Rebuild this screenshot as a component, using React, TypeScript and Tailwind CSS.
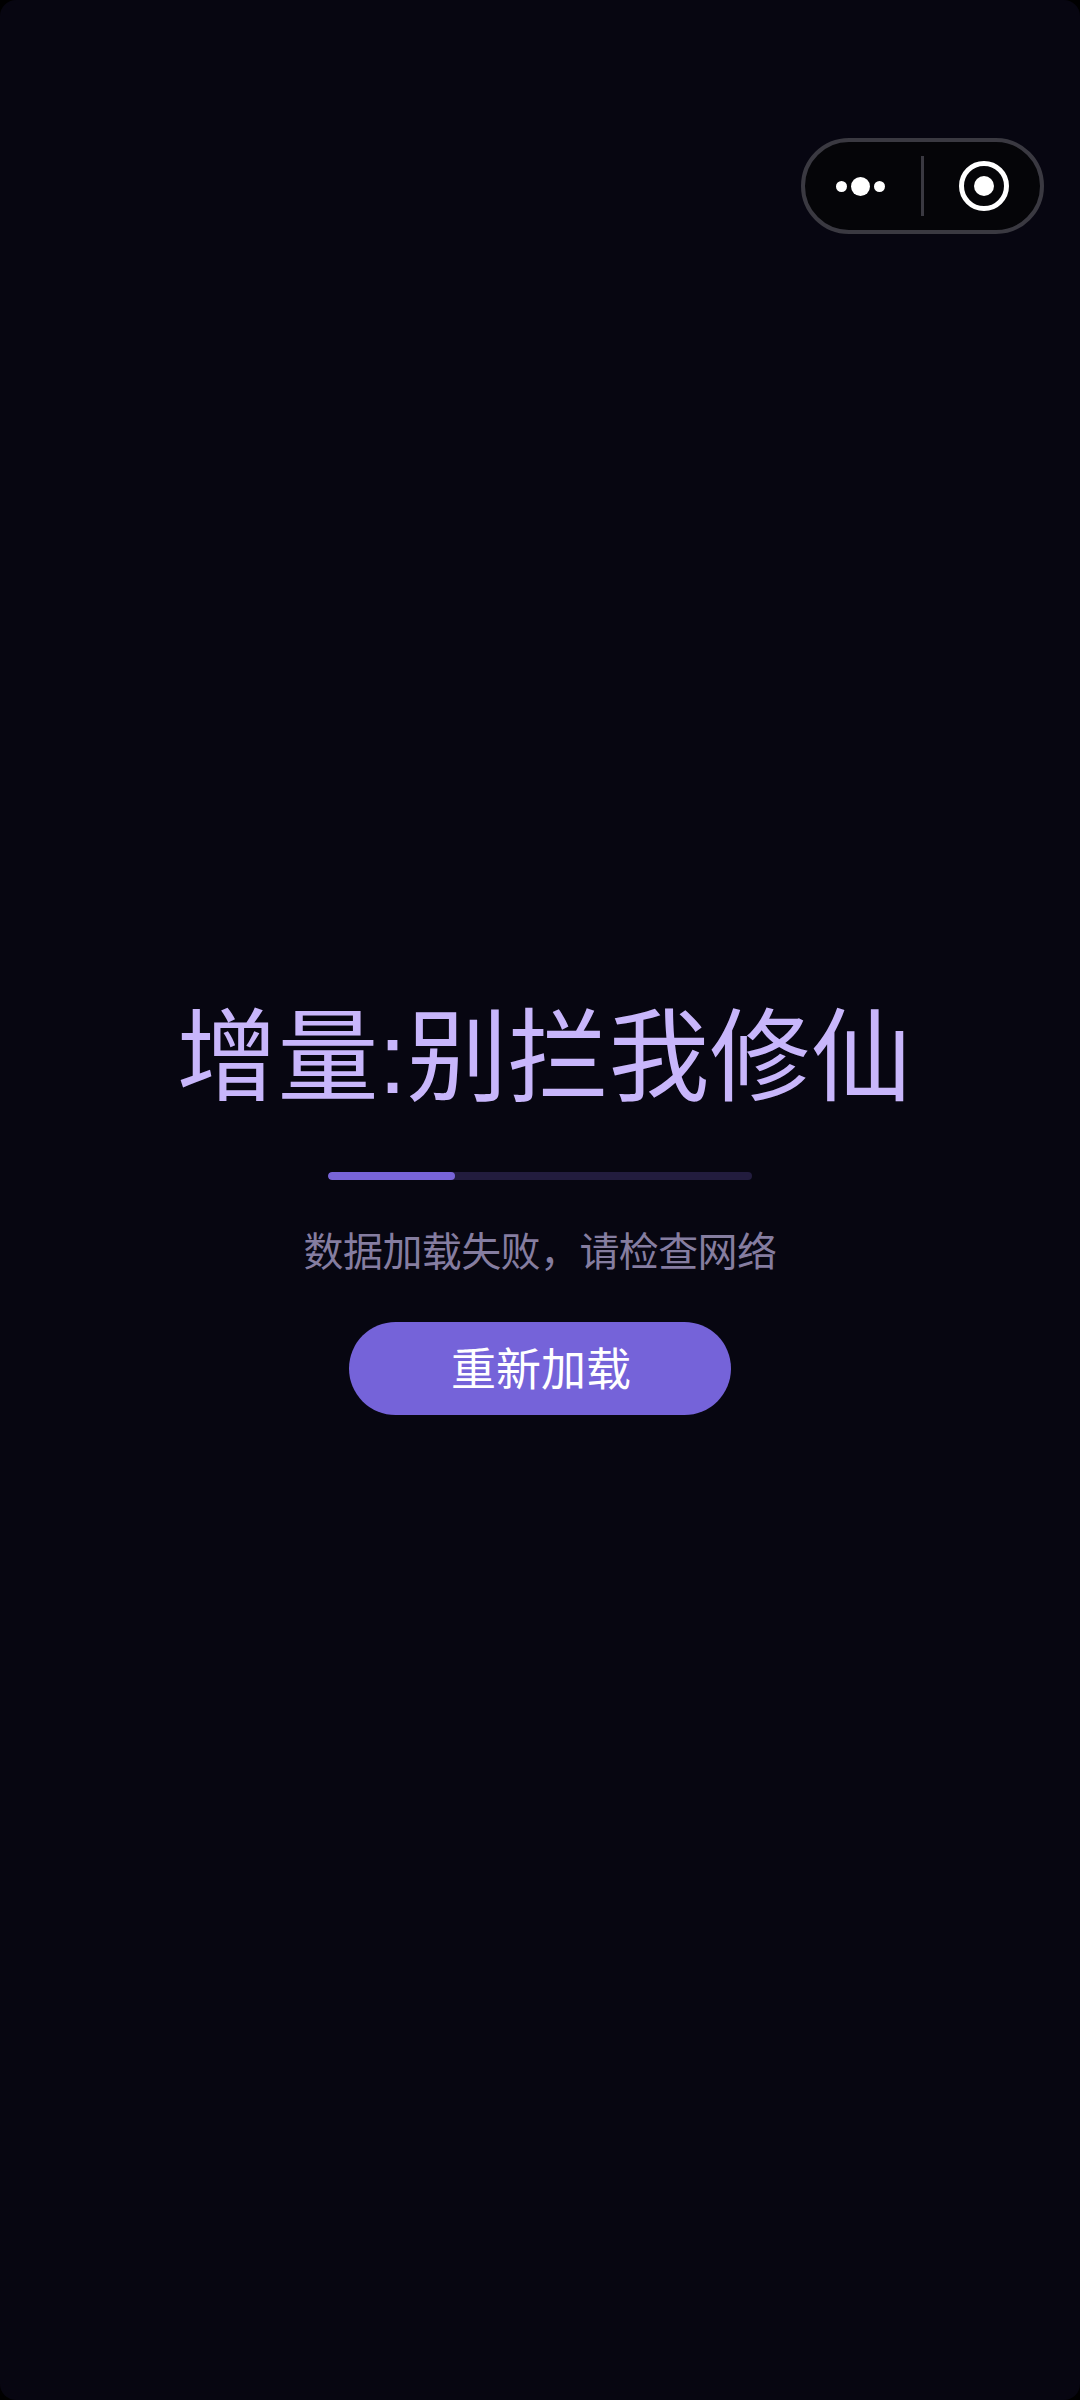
import React from 'react';

const font = {
  fontFamily: '"Liberation Sans", "Noto Sans CJK SC", sans-serif',
};

const Capsule: React.FC = () => (
  <div className="absolute left-[801px] top-[138px] flex h-[96px] w-[243px] items-center rounded-full border-[4px] border-[#3a3941] bg-[#050508]">
    <div className="flex w-[116px] items-center justify-center gap-[2px] pr-[5px]">
      <span className="h-[11px] w-[11px] rounded-full bg-white" />
      <span className="mx-[2px] h-[19px] w-[19px] rounded-full bg-white" />
      <span className="h-[11px] w-[11px] rounded-full bg-white" />
    </div>
    <div className="h-[60px] w-[3px] bg-[#3a3941]" />
    <div className="flex flex-1 items-center justify-center pl-[4px]">
      <svg width="50" height="50" viewBox="0 0 50 50">
        <circle cx="25" cy="25" r="22.5" fill="none" stroke="#fff" strokeWidth="5" />
        <circle cx="25" cy="25" r="10" fill="#fff" />
      </svg>
    </div>
  </div>
);

export default function App() {
  return (
    <div className="bg-black">
      <div
        className="relative flex h-[2400px] w-[1080px] flex-col items-center rounded-[16px] bg-[#070611] pt-[998px]"
        style={font}
      >
        <Capsule />

        <h1 className="ml-[8px] text-[101px] leading-[120px] font-normal whitespace-nowrap text-[#c8b6fb]">
          增量:别拦我修仙
        </h1>

        <div className="mt-[54px] h-[8px] w-[424px] overflow-hidden rounded-full bg-[#221c3e]">
          <div className="h-full w-[30%] rounded-full bg-[#7864d8]" />
        </div>

        <p className="mt-[42px] text-[40px] leading-[60px] tracking-[-0.6px] whitespace-nowrap text-[#857da0]">
          数据加载失败，请检查网络
        </p>

        <button className="mt-[40px] flex h-[93px] w-[382px] items-center justify-center rounded-full bg-[#7563d9] pt-[5px] pl-[2px] text-[45px] text-white">
          重新加载
        </button>
      </div>
    </div>
  );
}
